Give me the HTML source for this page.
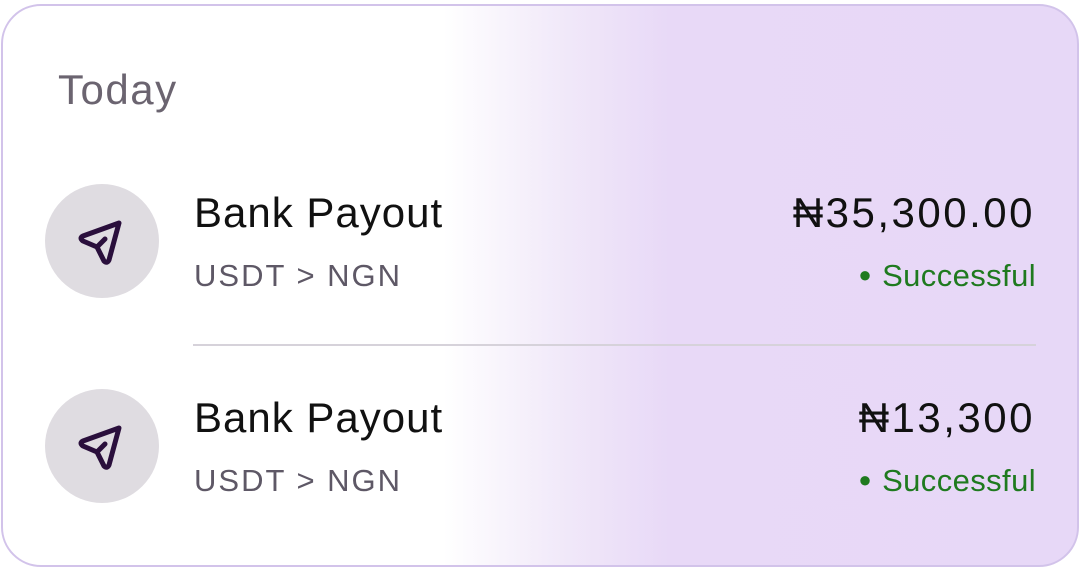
<!DOCTYPE html>
<html><head><style>
body{margin:0;width:1082px;height:570px;background:#fff;overflow:hidden;font-family:"Liberation Sans",sans-serif}
.card{position:absolute;left:1px;top:4px;width:1078px;height:563px;border:2px solid #d2c3ea;border-radius:40px;box-sizing:border-box;background:linear-gradient(90deg,#fff 0%,#fff 41%,#f1e9f9 52%,#e8d9f7 62%,#e7d8f7 100%);overflow:hidden}
.t{position:absolute;white-space:nowrap}
.circ{position:absolute;width:114px;height:114px;border-radius:50%;background:#dfdce1}
.name{font-size:42px;letter-spacing:1px;color:#111}
.sub{font-size:31px;letter-spacing:2px;color:#5e5866}
.amt{font-size:42px;letter-spacing:2.5px;color:#111}
.ok{font-size:31px;letter-spacing:0.4px;color:#1f7a1f}
</style></head><body>
<div class="card"></div>
<div class="t" style="left:58px;top:66px;font-size:42px;letter-spacing:1.5px;color:#6b6470">Today</div>

<div class="circ" style="left:45px;top:184px"></div>
<svg style="position:absolute;left:45px;top:184px" width="114" height="114"><g fill="none" stroke="#2a0f3c" stroke-width="5" stroke-linejoin="round" stroke-linecap="round"><path d="M74,39 L38,52 Q34,54 38,57 L52,63 L59,77 Q62,80 64,76 Z"/><path d="M52,63 L60,55"/></g></svg>
<div class="t name" style="left:194px;top:189px">Bank Payout</div>
<div class="t sub" style="left:194px;top:258px">USDT &gt; NGN</div>
<div class="t amt" style="right:47px;top:189px">₦35,300.00</div>
<div class="t ok" style="right:46px;top:258px"><span style="font-size:22px;vertical-align:4px;margin-right:10px">●</span>Successful</div>

<div style="position:absolute;left:193px;top:344px;width:843px;height:2px;background:#d6d2da"></div>

<div class="circ" style="left:45px;top:389px"></div>
<svg style="position:absolute;left:45px;top:389px" width="114" height="114"><g fill="none" stroke="#2a0f3c" stroke-width="5" stroke-linejoin="round" stroke-linecap="round"><path d="M74,39 L38,52 Q34,54 38,57 L52,63 L59,77 Q62,80 64,76 Z"/><path d="M52,63 L60,55"/></g></svg>
<div class="t name" style="left:194px;top:394px">Bank Payout</div>
<div class="t sub" style="left:194px;top:463px">USDT &gt; NGN</div>
<div class="t amt" style="right:47px;top:394px">₦13,300</div>
<div class="t ok" style="right:46px;top:463px"><span style="font-size:22px;vertical-align:4px;margin-right:10px">●</span>Successful</div>
</body></html>
